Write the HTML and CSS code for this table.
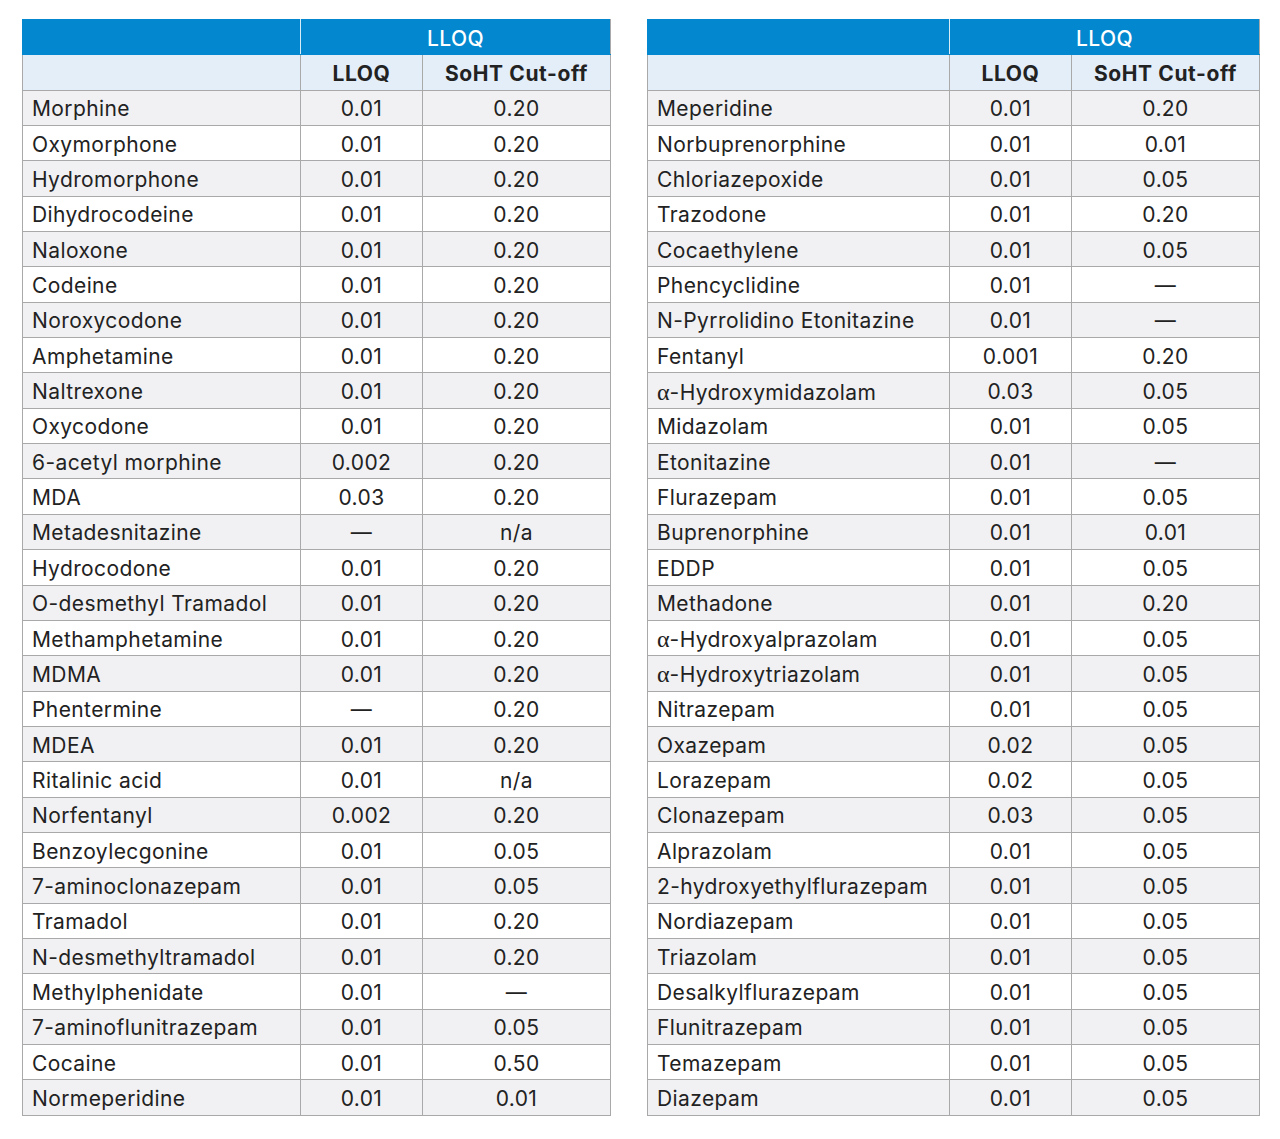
FILE: index.html
```html
<!DOCTYPE html>
<html>
<head>
<meta charset="utf-8">
<link rel="stylesheet" href="styles.css">
</head>
<body>
<div class="page">
<table class="tbl left">
<colgroup><col class="c1l"><col class="c2"><col class="c3"></colgroup>
<thead>
<tr class="h1"><th></th><th colspan="2">LLOQ</th></tr>
<tr class="h2"><th></th><th>LLOQ</th><th>SoHT Cut-off</th></tr>
</thead>
<tbody>
<tr><td>Morphine</td><td>0.01</td><td>0.20</td></tr>
<tr><td>Oxymorphone</td><td>0.01</td><td>0.20</td></tr>
<tr><td>Hydromorphone</td><td>0.01</td><td>0.20</td></tr>
<tr><td>Dihydrocodeine</td><td>0.01</td><td>0.20</td></tr>
<tr><td>Naloxone</td><td>0.01</td><td>0.20</td></tr>
<tr><td>Codeine</td><td>0.01</td><td>0.20</td></tr>
<tr><td>Noroxycodone</td><td>0.01</td><td>0.20</td></tr>
<tr><td>Amphetamine</td><td>0.01</td><td>0.20</td></tr>
<tr><td>Naltrexone</td><td>0.01</td><td>0.20</td></tr>
<tr><td>Oxycodone</td><td>0.01</td><td>0.20</td></tr>
<tr><td>6-acetyl morphine</td><td>0.002</td><td>0.20</td></tr>
<tr><td>MDA</td><td>0.03</td><td>0.20</td></tr>
<tr><td>Metadesnitazine</td><td>—</td><td>n/a</td></tr>
<tr><td>Hydrocodone</td><td>0.01</td><td>0.20</td></tr>
<tr><td>O-desmethyl Tramadol</td><td>0.01</td><td>0.20</td></tr>
<tr><td>Methamphetamine</td><td>0.01</td><td>0.20</td></tr>
<tr><td>MDMA</td><td>0.01</td><td>0.20</td></tr>
<tr><td>Phentermine</td><td>—</td><td>0.20</td></tr>
<tr><td>MDEA</td><td>0.01</td><td>0.20</td></tr>
<tr><td>Ritalinic acid</td><td>0.01</td><td>n/a</td></tr>
<tr><td>Norfentanyl</td><td>0.002</td><td>0.20</td></tr>
<tr><td>Benzoylecgonine</td><td>0.01</td><td>0.05</td></tr>
<tr><td>7-aminoclonazepam</td><td>0.01</td><td>0.05</td></tr>
<tr><td>Tramadol</td><td>0.01</td><td>0.20</td></tr>
<tr><td>N-desmethyltramadol</td><td>0.01</td><td>0.20</td></tr>
<tr><td>Methylphenidate</td><td>0.01</td><td>—</td></tr>
<tr><td>7-aminoflunitrazepam</td><td>0.01</td><td>0.05</td></tr>
<tr><td>Cocaine</td><td>0.01</td><td>0.50</td></tr>
<tr><td>Normeperidine</td><td>0.01</td><td>0.01</td></tr>
</tbody>
</table>
<table class="tbl right">
<colgroup><col class="c1r"><col class="c2"><col class="c3"></colgroup>
<thead>
<tr class="h1"><th></th><th colspan="2">LLOQ</th></tr>
<tr class="h2"><th></th><th>LLOQ</th><th>SoHT Cut-off</th></tr>
</thead>
<tbody>
<tr><td>Meperidine</td><td>0.01</td><td>0.20</td></tr>
<tr><td>Norbuprenorphine</td><td>0.01</td><td>0.01</td></tr>
<tr><td>Chloriazepoxide</td><td>0.01</td><td>0.05</td></tr>
<tr><td>Trazodone</td><td>0.01</td><td>0.20</td></tr>
<tr><td>Cocaethylene</td><td>0.01</td><td>0.05</td></tr>
<tr><td>Phencyclidine</td><td>0.01</td><td>—</td></tr>
<tr><td>N-Pyrrolidino Etonitazine</td><td>0.01</td><td>—</td></tr>
<tr><td>Fentanyl</td><td>0.001</td><td>0.20</td></tr>
<tr><td><span class="a">α</span>-Hydroxymidazolam</td><td>0.03</td><td>0.05</td></tr>
<tr><td>Midazolam</td><td>0.01</td><td>0.05</td></tr>
<tr><td>Etonitazine</td><td>0.01</td><td>—</td></tr>
<tr><td>Flurazepam</td><td>0.01</td><td>0.05</td></tr>
<tr><td>Buprenorphine</td><td>0.01</td><td>0.01</td></tr>
<tr><td>EDDP</td><td>0.01</td><td>0.05</td></tr>
<tr><td>Methadone</td><td>0.01</td><td>0.20</td></tr>
<tr><td><span class="a">α</span>-Hydroxyalprazolam</td><td>0.01</td><td>0.05</td></tr>
<tr><td><span class="a">α</span>-Hydroxytriazolam</td><td>0.01</td><td>0.05</td></tr>
<tr><td>Nitrazepam</td><td>0.01</td><td>0.05</td></tr>
<tr><td>Oxazepam</td><td>0.02</td><td>0.05</td></tr>
<tr><td>Lorazepam</td><td>0.02</td><td>0.05</td></tr>
<tr><td>Clonazepam</td><td>0.03</td><td>0.05</td></tr>
<tr><td>Alprazolam</td><td>0.01</td><td>0.05</td></tr>
<tr><td>2-hydroxyethylflurazepam</td><td>0.01</td><td>0.05</td></tr>
<tr><td>Nordiazepam</td><td>0.01</td><td>0.05</td></tr>
<tr><td>Triazolam</td><td>0.01</td><td>0.05</td></tr>
<tr><td>Desalkylflurazepam</td><td>0.01</td><td>0.05</td></tr>
<tr><td>Flunitrazepam</td><td>0.01</td><td>0.05</td></tr>
<tr><td>Temazepam</td><td>0.01</td><td>0.05</td></tr>
<tr><td>Diazepam</td><td>0.01</td><td>0.05</td></tr>
</tbody>
</table>
</div>
</body>
</html>
```
FILE: styles.css
```css
html, body {
  margin: 0;
  padding: 0;
  background: #ffffff;
}
.page {
  display: flex;
  align-items: flex-start;
  gap: 36px;
  padding: 19px 0 0 22px;
  font-family: Inter, "Liberation Sans", sans-serif;
  color: #222222;
}
.tbl {
  border-collapse: collapse;
  table-layout: fixed;
  font-size: 21px;
  letter-spacing: 0.4px;
}
.left { width: 589px; }
.right { width: 613px; }
.c1l { width: 278px; }
.c1r { width: 302px; }
.c2 { width: 122px; }
.c3 { width: auto; }
.tbl th, .tbl td {
  border: 1px solid #a9a9a9;
  height: 35.35px;
  padding: 2px 0 0 0;
  box-sizing: border-box;
  vertical-align: middle;
  text-align: center;
  font-weight: 400;
  line-height: 1;
}
.tbl td:first-child {
  text-align: left;
  padding-left: 9px;
}
.h1 th {
  background: #0387cf;
  color: #ffffff;
  font-weight: 500;
  border-color: #0387cf #d8ecf8 #0387cf #0387cf;
}
.h1 th + th {
  border-right-color: #a9a9a9;
}
.h2 th {
  background: #e3eef9;
  font-weight: 700;
  color: #222222;
  letter-spacing: 0.6px;
}
tbody tr:nth-child(odd) td {
  background: #f1f1f3;
}
tbody tr:nth-child(even) td {
  background: #ffffff;
}
.a {
  font-family: "Liberation Serif", serif;
  font-size: 24px;
  letter-spacing: 0;
}
```
